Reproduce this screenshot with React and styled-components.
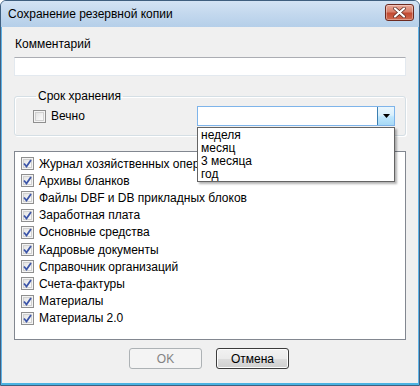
import React from "react";
import styled, { createGlobalStyle } from "styled-components";

const Global = createGlobalStyle`
  html, body { margin: 0; padding: 0; background: #ffffff; }
  body { font-family: "Liberation Sans", Arial, sans-serif; font-size: 12px; color: #000; }
  * { box-sizing: border-box; }
`;

const Window = styled.div`
  width: 420px;
  height: 386px;
  display: flex;
  flex-direction: column;
  border: 1px solid #3f5f7f;
  border-radius: 6px 6px 0 0;
  overflow: hidden;
  background: #bcd3eb;
`;

const TitleBar = styled.div`
  height: 26px;
  flex: none;
  display: flex;
  align-items: center;
  justify-content: space-between;
  padding: 0 5px 0 7px;
  background: linear-gradient(#d3e3f4 0%, #c3d8ee 50%, #b5cfe9 100%);
`;

const Title = styled.div`
  font-size: 12px;
  color: #000;
`;

const CloseButton = styled.div`
  width: 29px;
  height: 17px;
  border: 1px solid #6d2a20;
  border-radius: 3px;
  background: linear-gradient(#e9a899 0%, #d8816c 45%, #c24a32 55%, #cf6a50 100%);
  display: flex;
  align-items: center;
  justify-content: center;
  margin-top: -4px;
  box-shadow: inset 0 0 0 1px rgba(255,255,255,0.35);
`;

const Body = styled.div`
  flex: 1;
  display: flex;
  flex-direction: column;
  background: #f0f0f0;
  border-left: 1px solid #5fb2e6;
  border-right: 1px solid #5fb2e6;
  border-bottom: 2px solid #4ab3e2;
  padding: 10px 12px 0 12px;
`;

const Label = styled.div`
  height: 14px;
  line-height: 14px;
  margin-left: 1px;
`;

const TextInput = styled.div`
  margin-top: 6px;
  height: 19px;
  background: #fff;
  border: 1px solid #e3e9ef;
  border-top-color: #abadb3;
`;

const GroupBox = styled.fieldset`
  margin: 13px 0 0 0;
  padding: 0 0 0 18px;
  height: 47px;
  border: 1px solid #d5dfe5;
  border-radius: 3px;
  box-shadow: inset 1px 1px 0 #fff, 1px 1px 0 #fff;
  display: flex;
  align-items: flex-start;
`;

const Legend = styled.legend`
  padding: 0 2px;
  margin-left: 3px;
  line-height: 14px;
`;

const GroupRow = styled.div`
  flex: 1;
  display: flex;
  align-items: center;
  justify-content: space-between;
  padding-right: 10px;
  margin-top: 3px;
  height: 20px;
`;

const CheckLine = styled.label`
  display: flex;
  align-items: center;
  gap: 5px;
  height: 17px;
  white-space: nowrap;
`;

const BoxWrap = styled.span`
  width: 13px;
  height: 13px;
  flex: none;
  border: 1px solid #8f8f8f;
  background: linear-gradient(135deg, #dcdcdc 0%, #f4f4f4 60%, #ffffff 100%);
  display: flex;
  align-items: center;
  justify-content: center;
  box-shadow: inset 0 0 0 1px #f4f4f4, inset 0 0 0 2px #d0d0d0;
`;

const Combo = styled.div`
  position: relative;
  width: 198px;
  height: 20px;
  border: 1px solid #7eb4ea;
  background: #fff;
  display: flex;
  justify-content: flex-end;
`;

const ComboButton = styled.div`
  width: 17px;
  height: 100%;
  border-left: 1px solid #3c7fb1;
  background: linear-gradient(#eaf6fd 0%, #d9f0fc 45%, #bee6fd 55%, #a7d9f5 100%);
  display: flex;
  align-items: center;
  justify-content: center;
`;

const DropList = styled.ul`
  position: absolute;
  left: -1px;
  top: 20px;
  width: 198px;
  margin: 0;
  padding: 1px 0 0 0;
  list-style: none;
  background: #fff;
  border: 1px solid #646464;
  box-shadow: 2px 2px 2px rgba(0,0,0,0.3);
  z-index: 5;
`;

const DropItem = styled.li`
  height: 13px;
  line-height: 13px;
  padding-left: 3px;
`;

const ListBox = styled.div`
  margin-top: 15px;
  height: 189px;
  background: #fff;
  border: 1px solid #828790;
  padding: 3px 0 0 6px;
  display: flex;
  flex-direction: column;
  overflow: hidden;
`;

const ListItem = styled(CheckLine)`
  height: 17.2px;
`;

const Buttons = styled.div`
  display: flex;
  justify-content: center;
  gap: 14px;
  margin-top: 8px;
  padding-right: 2px;
`;

const Button = styled.div`
  width: 73px;
  height: 21px;
  border-radius: 3px;
  display: flex;
  align-items: center;
  justify-content: center;
  border: 1px solid ${(p) => (p.$disabled ? "#adb2b5" : "#3c3c3c")};
  color: ${(p) => (p.$disabled ? "#838383" : "#000")};
  background: ${(p) =>
    p.$disabled
      ? "#f4f4f4"
      : "linear-gradient(#f2f2f2 0%, #ebebeb 50%, #dddddd 51%, #cfcfcf 100%)"};
  box-shadow: ${(p) => (p.$disabled ? "none" : "inset 0 0 0 1px #fcfcfc")};
`;

const Check = ({ checked }) => (
  <BoxWrap>
    {checked && (
      <svg width="9" height="9" viewBox="0 0 9 9">
        <path d="M1 4.5 L3.5 7.5 L8 1" fill="none" stroke="#3d56a8" strokeWidth="1.8" />
      </svg>
    )}
  </BoxWrap>
);

const items = [
  "Журнал хозяйственных операций",
  "Архивы бланков",
  "Файлы DBF и DB прикладных блоков",
  "Заработная плата",
  "Основные средства",
  "Кадровые документы",
  "Справочник организаций",
  "Счета-фактуры",
  "Материалы",
  "Материалы 2.0",
];

export default function App() {
  return (
    <>
      <Global />
      <Window>
        <TitleBar>
          <Title>Сохранение резервной копии</Title>
          <CloseButton>
            <svg width="13" height="11" viewBox="0 0 13 11">
              <path d="M2 1.5 L11 9.5 M11 1.5 L2 9.5" stroke="#5a2a22" strokeWidth="3.6" strokeLinecap="round" />
              <path d="M2 1.5 L11 9.5 M11 1.5 L2 9.5" stroke="#ffffff" strokeWidth="2.2" strokeLinecap="round" />
            </svg>
          </CloseButton>
        </TitleBar>
        <Body>
          <Label>Комментарий</Label>
          <TextInput />
          <GroupBox>
            <Legend>Срок хранения</Legend>
            <GroupRow>
              <CheckLine>
                <Check />
                Вечно
              </CheckLine>
              <Combo>
                <ComboButton>
                  <svg width="7" height="4" viewBox="0 0 7 4">
                    <path d="M0 0 H7 L3.5 4 Z" fill="#000" />
                  </svg>
                </ComboButton>
                <DropList>
                  <DropItem>неделя</DropItem>
                  <DropItem>месяц</DropItem>
                  <DropItem>3 месяца</DropItem>
                  <DropItem>год</DropItem>
                </DropList>
              </Combo>
            </GroupRow>
          </GroupBox>
          <ListBox>
            {items.map((t) => (
              <ListItem key={t}>
                <Check checked />
                {t}
              </ListItem>
            ))}
          </ListBox>
          <Buttons>
            <Button $disabled>OK</Button>
            <Button>Отмена</Button>
          </Buttons>
        </Body>
      </Window>
    </>
  );
}
